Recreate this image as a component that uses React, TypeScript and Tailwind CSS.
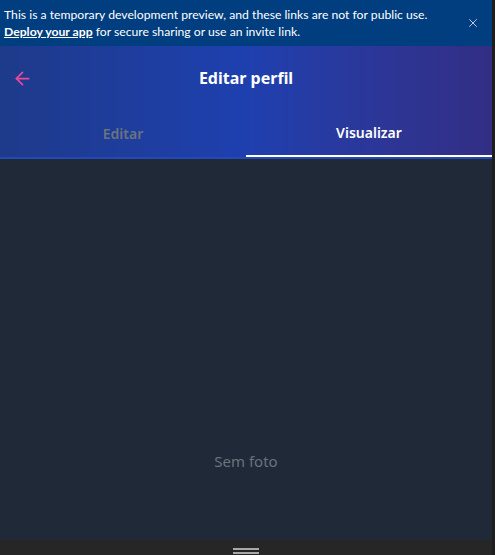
import { ArrowLeft, X } from 'lucide-react';

export default function App() {
  return (
    <div
      className="flex h-[555px] w-[495px] overflow-hidden bg-[#1e1e1e]"
      style={{ fontFamily: '"Noto Sans", "Open Sans", sans-serif' }}
    >
      <div className="flex w-[492px] flex-col">
        {/* preview banner */}
        <div
          className="flex h-[46px] items-center bg-[#003e7f] pl-[4px] pr-[12px] text-[12.2px] leading-[17px] text-white"
          style={{ fontFamily: 'Lato, "Noto Sans", sans-serif' }}
        >
          <div className="flex-1">
            <div>This is a temporary development preview, and these links are not for public use.</div>
            <div>
              <span className="font-bold underline">Deploy your app</span> for secure sharing or use an invite link.
            </div>
          </div>
          <X className="h-[14px] w-[14px] text-[#c8d4e4]" strokeWidth={1.6} />
        </div>

        {/* header */}
        <div className="border-b-2 border-[#2349b8] bg-linear-to-r from-[#1e3a8a] via-[#1e40af] to-[#322e84]">
          <div className="relative flex h-[64px] items-center justify-center">
            <ArrowLeft className="absolute left-[12px] h-[21px] w-[21px] text-[#ec4899]" strokeWidth={2} />
            <h1 className="text-[16px] font-bold text-white">Editar perfil</h1>
          </div>
          <div className="flex h-[47px]">
            <button className="flex flex-1 items-center justify-center text-[14px] font-semibold text-[#6b7280]">
              Editar
            </button>
            <button className="flex flex-1 items-center justify-center border-b-2 border-white text-[14px] font-semibold text-white">
              Visualizar
            </button>
          </div>
        </div>

        {/* preview body */}
        <div className="flex flex-1 items-center justify-center bg-[#1f2937] pt-[223px]">
          <span className="text-[15px] text-[#6b7280]">Sem foto</span>
        </div>

        {/* bottom handle */}
        <div className="flex h-[15px] flex-col items-center gap-[2px] bg-[#262626] pt-[8px]">
          <div className="h-[2px] w-[26px] bg-[#a8a8a8]" />
          <div className="h-[2px] w-[26px] bg-[#a8a8a8]" />
        </div>
      </div>
    </div>
  );
}
